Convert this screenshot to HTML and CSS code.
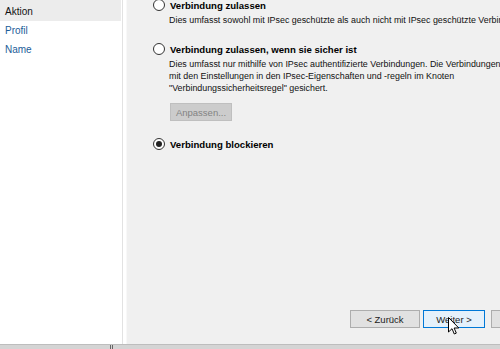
FILE: index.html
```html
<!DOCTYPE html>
<html>
<head>
<meta charset="utf-8">
<link rel="stylesheet" href="styles.css">
</head>
<body>
<div class="window">
  <div class="main">
    <nav class="sidebar">
      <div class="step active">Aktion</div>
      <div class="step link">Profil</div>
      <div class="step link">Name</div>
    </nav>
    <div class="sep"></div>
    <section class="content">
      <div class="options">
        <div class="option">
          <div class="opt-head"><span class="radio"></span><span class="label">Verbindung zulassen</span></div>
          <p class="desc">Dies umfasst sowohl mit IPsec geschützte als auch nicht mit IPsec geschützte Verbindungen.</p>
        </div>
        <div class="option">
          <div class="opt-head"><span class="radio"></span><span class="label">Verbindung zulassen, wenn sie sicher ist</span></div>
          <p class="desc">Dies umfasst nur mithilfe von IPsec authentifizierte Verbindungen. Die Verbindungen<br>mit den Einstellungen in den IPsec-Eigenschaften und -regeln im Knoten<br>"Verbindungssicherheitsregel" gesichert.</p>
          <button class="btn disabled" disabled>Anpassen...</button>
        </div>
        <div class="option">
          <div class="opt-head"><span class="radio checked"></span><span class="label">Verbindung blockieren</span></div>
        </div>
      </div>
      <div class="buttons">
        <button class="btn back">&lt; Zurück</button>
        <button class="btn primary">Weiter &gt;</button>
        <button class="btn cut"></button>
      </div>
      <svg class="cursor" width="12" height="19" viewBox="0 0 12 19"><path d="M0.5 0.5 L0.5 15 L4 11.7 L6.3 17 L8.3 16.1 L6.1 11 L10.8 11 Z" fill="#fff" stroke="#000" stroke-width="1"/></svg>
    </section>
  </div>
  <div class="statusbar"><span class="grip"></span></div>
</div>
</body>
</html>
```
FILE: styles.css
```css
html, body {
  margin: 0;
  padding: 0;
}
body {
  width: 500px;
  height: 349px;
  overflow: hidden;
  font-family: "Liberation Sans", Arial, sans-serif;
  font-size: 10px;
  color: #000;
  background: #f0f0f0;
}
.window {
  display: flex;
  flex-direction: column;
  height: 349px;
}
.main {
  display: flex;
  height: 345px;
}
.sidebar {
  width: 122px;
  background: #fff;
  flex: none;
}
.step {
  height: 19px;
  line-height: 19px;
  padding-left: 5px;
  font-size: 10px;
}
.step.active {
  height: 21px;
  line-height: 23px;
  background: #ececec;
  margin-right: 1px;
  color: #111;
}
.step.link {
  color: #1c5d99;
}
.sep {
  width: 3px;
  flex: none;
  background: #fff;
  border-left: 1px solid #e2e2e2;
  border-right: 1px solid #f8f8f8;
}
.content {
  position: relative;
  flex: 1;
  display: flex;
  flex-direction: column;
  justify-content: space-between;
  overflow: hidden;
}
.options {
  margin-top: -1px;
  padding-left: 26px;
}
.option {
  margin-bottom: 17px;
}
.opt-head {
  display: flex;
  align-items: center;
  height: 12px;
}
.radio {
  width: 10px;
  height: 10px;
  border: 1px solid #333;
  border-radius: 50%;
  background: #fff;
  margin-right: 5px;
  flex: none;
  display: flex;
  align-items: center;
  justify-content: center;
}
.radio.checked::after {
  content: "";
  width: 6px;
  height: 6px;
  border-radius: 50%;
  background: #222;
}
.label {
  font-weight: bold;
  font-size: 9.6px;
}
.desc {
  margin: 3px 0 0 16px;
  font-size: 8.9px;
  line-height: 12px;
  color: #111;
  white-space: nowrap;
}
.btn {
  font-family: "Liberation Sans", Arial, sans-serif;
  font-size: 9.5px;
  height: 18px;
  padding: 0;
  background: #e1e1e1;
  border: 1px solid #adadad;
  color: #222;
}
.btn.disabled {
  margin: 9px 0 0 17px;
  width: 62px;
  background: #cccccc;
  border-color: #bfbfbf;
  color: #838383;
}
.buttons {
  display: flex;
  justify-content: flex-end;
  padding-bottom: 16px;
  margin-right: -11px;
}
.buttons .btn.back {
  width: 70px;
}
.buttons .btn.primary {
  width: 62px;
  margin-left: 3px;
  background: #e5f1fb;
  border-color: #0078d7;
}
.buttons .btn.cut {
  width: 20px;
  margin-left: 6px;
}
.cursor {
  position: absolute;
  left: 321px;
  top: 317px;
}
.statusbar {
  height: 4px;
  background: #d4d4d4;
  border-top: 1px solid #bdbdbd;
  position: relative;
}
.grip {
  position: absolute;
  left: 110px;
  top: 0;
  width: 1px;
  height: 4px;
  border-left: 1px solid #666;
  border-right: 1px solid #666;
}
```
